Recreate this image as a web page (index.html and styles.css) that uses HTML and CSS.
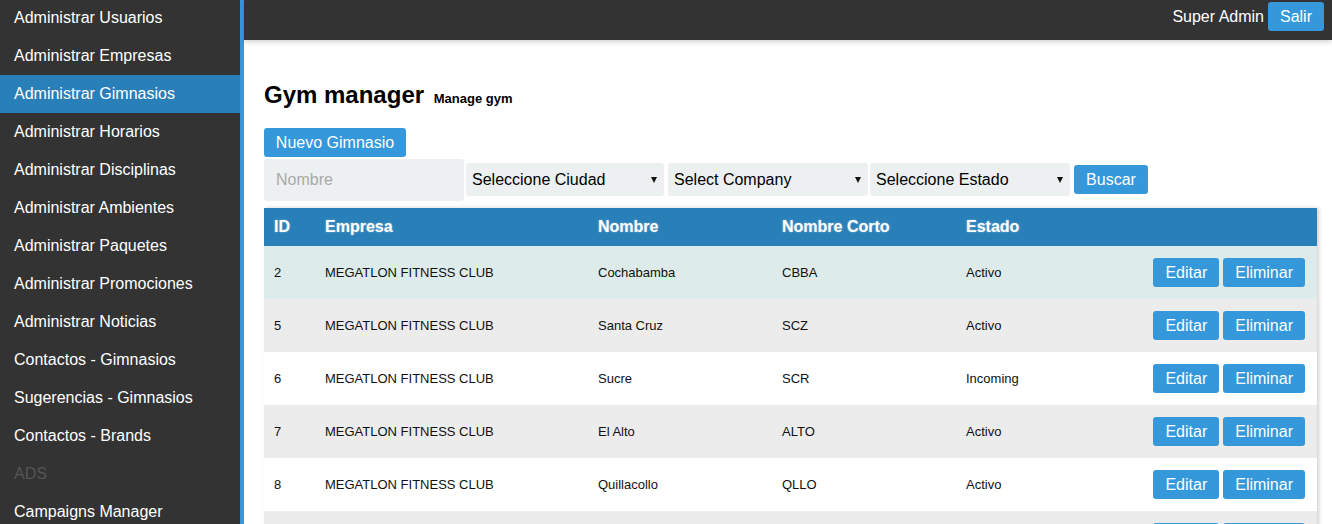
FILE: index.html
```html
<!DOCTYPE html>
<html lang="es">
<head>
<meta charset="utf-8">
<title>Gym manager</title>
<link rel="stylesheet" href="styles.css">
</head>
<body>
<aside class="sidebar">
  <ul class="menu">
    <li class="menu-item">Administrar Usuarios</li>
    <li class="menu-item">Administrar Empresas</li>
    <li class="menu-item active">Administrar Gimnasios</li>
    <li class="menu-item">Administrar Horarios</li>
    <li class="menu-item">Administrar Disciplinas</li>
    <li class="menu-item">Administrar Ambientes</li>
    <li class="menu-item">Administrar Paquetes</li>
    <li class="menu-item">Administrar Promociones</li>
    <li class="menu-item">Administrar Noticias</li>
    <li class="menu-item">Contactos - Gimnasios</li>
    <li class="menu-item">Sugerencias - Gimnasios</li>
    <li class="menu-item">Contactos - Brands</li>
    <li class="menu-item section">ADS</li>
    <li class="menu-item">Campaigns Manager</li>
  </ul>
</aside>
<div class="main">
  <header class="topbar">
    <span class="user">Super Admin</span>
    <button class="btn btn-top">Salir</button>
  </header>
  <section class="content">
    <h1 class="title">Gym manager <small class="subtitle">Manage gym</small></h1>
    <button class="btn btn-new">Nuevo Gimnasio</button>
    <div class="filters">
      <input class="field" type="text" placeholder="Nombre">
      <div class="select-wrap sw-city"><select class="select"><option>Seleccione Ciudad</option></select></div>
      <div class="select-wrap sw-company"><select class="select"><option>Select Company</option></select></div>
      <div class="select-wrap sw-state"><select class="select"><option>Seleccione Estado</option></select></div>
      <button class="btn btn-search">Buscar</button>
    </div>
    <table class="grid">
      <colgroup>
        <col class="c-id"><col class="c-emp"><col class="c-nom"><col class="c-corto"><col class="c-est"><col>
      </colgroup>
      <thead>
        <tr><th>ID</th><th>Empresa</th><th>Nombre</th><th>Nombre Corto</th><th>Estado</th><th></th></tr>
      </thead>
      <tbody>
        <tr class="hover"><td>2</td><td>MEGATLON FITNESS CLUB</td><td>Cochabamba</td><td>CBBA</td><td>Activo</td><td class="actions"><button class="btn btn-row">Editar</button><button class="btn btn-row">Eliminar</button></td></tr>
        <tr class="odd"><td>5</td><td>MEGATLON FITNESS CLUB</td><td>Santa Cruz</td><td>SCZ</td><td>Activo</td><td class="actions"><button class="btn btn-row">Editar</button><button class="btn btn-row">Eliminar</button></td></tr>
        <tr><td>6</td><td>MEGATLON FITNESS CLUB</td><td>Sucre</td><td>SCR</td><td>Incoming</td><td class="actions"><button class="btn btn-row">Editar</button><button class="btn btn-row">Eliminar</button></td></tr>
        <tr class="odd"><td>7</td><td>MEGATLON FITNESS CLUB</td><td>El Alto</td><td>ALTO</td><td>Activo</td><td class="actions"><button class="btn btn-row">Editar</button><button class="btn btn-row">Eliminar</button></td></tr>
        <tr><td>8</td><td>MEGATLON FITNESS CLUB</td><td>Quillacollo</td><td>QLLO</td><td>Activo</td><td class="actions"><button class="btn btn-row">Editar</button><button class="btn btn-row">Eliminar</button></td></tr>
        <tr class="odd"><td>9</td><td>MEGATLON FITNESS CLUB</td><td>Tarija</td><td>TJA</td><td>Activo</td><td class="actions"><button class="btn btn-row">Editar</button><button class="btn btn-row">Eliminar</button></td></tr>
      </tbody>
    </table>
  </section>
</div>
</body>
</html>
```

FILE: styles.css
```css
* { box-sizing: border-box; }
html, body { height: 100%; }
body {
  margin: 0;
  display: flex;
  font-family: "Liberation Sans", Arial, sans-serif;
  color: #000;
  background: #fff;
  overflow: hidden;
}
.sidebar {
  width: 244px;
  flex: none;
  height: 524px;
  background: #333333;
  border-right: 4px solid #3498db;
  overflow: hidden;
}
.menu {
  list-style: none;
  margin: -1px 0 0;
  padding: 0;
}
.menu-item {
  height: 38px;
  line-height: 38px;
  padding-left: 14px;
  font-size: 16px;
  color: #fff;
  white-space: nowrap;
}
.menu-item.active { background: #2980b9; }
.menu-item.section { color: #555; }
.main {
  flex: 1;
  min-width: 0;
  display: flex;
  flex-direction: column;
}
.topbar {
  height: 40px;
  flex: none;
  background: #333333;
  display: flex;
  align-items: center;
  justify-content: flex-end;
  padding-right: 8px;
  box-shadow: 0 2px 5px rgba(0,0,0,0.18);
  position: relative;
  z-index: 1;
}
.user {
  color: #fff;
  font-size: 16px;
  margin-right: 4px;
  margin-top: -6px;
}
.btn {
  font-family: "Liberation Sans", Arial, sans-serif;
  background: #3498db;
  color: #fff;
  border: 0;
  border-radius: 3px;
  font-size: 16px;
  padding: 0;
  cursor: pointer;
}
.btn-top {
  width: 56px;
  height: 29px;
  margin-top: -7px;
}
.content {
  padding: 41px 15px 0 20px;
}
.title {
  margin: 0;
  font-size: 24px;
  font-weight: bold;
  line-height: 28px;
  height: 28px;
}
.subtitle {
  font-size: 13px;
  margin-left: 3px;
}
.btn-new {
  display: block;
  margin-top: 19px;
  width: 142px;
  height: 29px;
}
.filters {
  display: flex;
  align-items: center;
  margin-top: 2px;
  height: 42px;
}
.field {
  width: 200px;
  height: 42px;
  border: 0;
  border-radius: 3px;
  background: #ecf0f1;
  padding: 0 12px;
  font-family: "Liberation Sans", Arial, sans-serif;
  font-size: 16px;
  color: #000;
}
.field::placeholder { color: #aaa; }
.select-wrap {
  position: relative;
  height: 33px;
  margin-top: -2px;
}
.sw-city { width: 198px; margin-left: 2px; }
.sw-company { width: 200px; margin-left: 4px; }
.sw-state { width: 200px; margin-left: 2px; }
.select-wrap::after {
  content: "";
  position: absolute;
  right: 7px;
  top: 14px;
  border-left: 3px solid transparent;
  border-right: 3px solid transparent;
  border-top: 6px solid #111;
  pointer-events: none;
}
.select {
  appearance: none;
  -webkit-appearance: none;
  width: 100%;
  height: 100%;
  border: 0;
  border-radius: 3px;
  background: #ecf0f1;
  padding: 0 6px;
  font-family: "Liberation Sans", Arial, sans-serif;
  font-size: 16px;
  color: #000;
}
.btn-search {
  width: 74px;
  height: 29px;
  margin-left: 4px;
  margin-top: -1px;
}
.grid {
  margin-top: 7px;
  width: 1053px;
  border-collapse: collapse;
  table-layout: fixed;
  box-shadow: 2px 0 4px rgba(0,0,0,0.18);
}
.c-id { width: 51px; }
.c-emp { width: 273px; }
.c-nom { width: 184px; }
.c-corto { width: 184px; }
.c-est { width: 184px; }
.grid th {
  background: #2980b9;
  color: #fff;
  height: 38px;
  text-align: left;
  padding: 0 10px;
  font-size: 16px;
  font-weight: bold;
  text-shadow: 0 0 2px rgba(255,255,255,0.45);
}
.grid td {
  height: 53px;
  padding: 0 10px;
  font-size: 13px;
  color: #111;
  background: #fff;
  white-space: nowrap;
}
.grid tr.odd td { background: #ececec; }
.grid tr.hover td { background: #ddecea; }
.grid td.actions {
  text-align: right;
  padding-right: 12px;
  font-size: 0;
}
.btn-row {
  height: 29px;
  padding: 0 12px;
  vertical-align: middle;
}
.btn-row + .btn-row { margin-left: 4px; }
```
